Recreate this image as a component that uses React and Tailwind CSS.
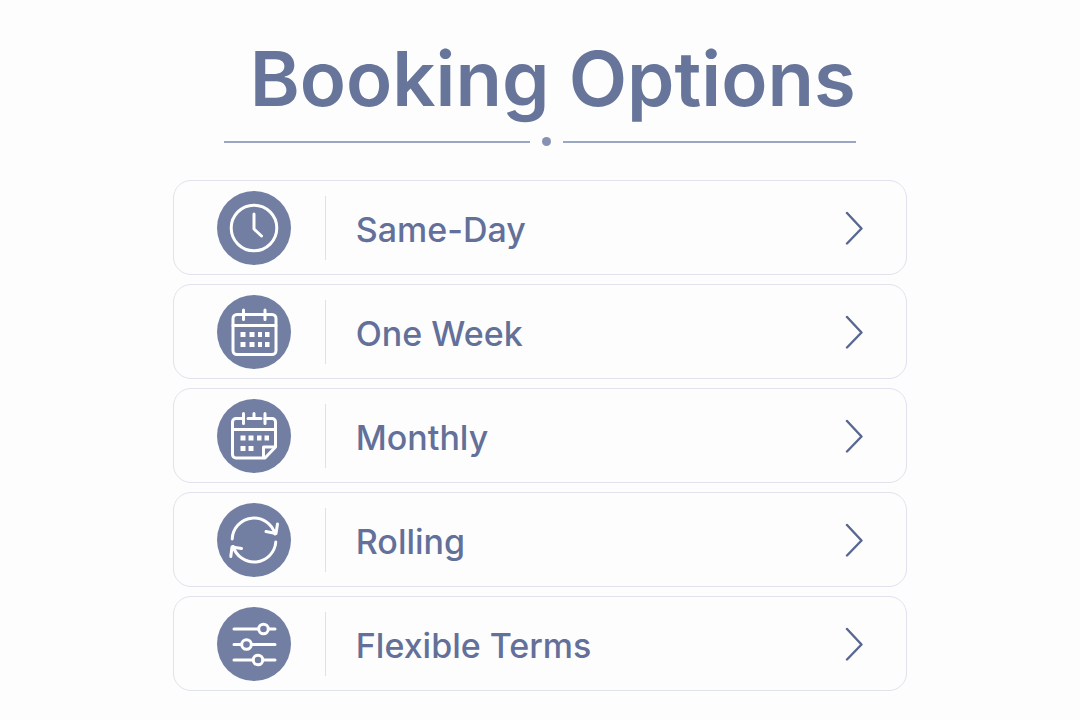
const iconProps = {
  viewBox: "0 0 74 74",
  fill: "none",
  stroke: "currentColor",
  strokeWidth: 3,
  strokeLinecap: "round",
  strokeLinejoin: "round",
  className: "size-full",
  "aria-hidden": true,
};

function ClockIcon() {
  return (
    <svg {...iconProps}>
      <circle cx="37" cy="37" r="22.8" />
      <path d="M37 23v15l7.500 7" />
    </svg>
  );
}

function WeekIcon() {
  return (
    <svg {...iconProps}>
      <rect x="16" y="19.500" width="43" height="40" rx="4" />
      <path d="M16 30.500h43M26.500 15v9.500M48 15v9.500" />
      <g fill="currentColor" stroke="none">
        <path d="M23.500 37h5v5h-5zM32.500 37h5v5h-5zM41 37h4v5h-4zM48 37h4.500v5h-4.500z" />
        <path d="M23.500 47h5v5h-5zM32.500 47h5v5h-5zM41 47h4v5h-4zM48 47h4.500v5h-4.500z" />
      </g>
    </svg>
  );
}

function MonthIcon() {
  return (
    <svg {...iconProps}>
      <path d="M26.500 19.500h-7.500a3.500 3.500 0 0 0-3.500 3.500v32.500a3.500 3.500 0 0 0 3.500 3.500h29l10.500-11v-25a3.500 3.500 0 0 0-3.500-3.500h-7M31 19.500h13" />
      <path d="M15.500 30.500h43M26.500 14.500v10M37 14.500v4M48 14.500v10M46.500 58.500v-10.500h11" />
      <g fill="currentColor" stroke="none">
        <path d="M23.500 36.500h5v5h-5zM31.500 36.500h5v5h-5zM40 36.500h4.500v5h-4.500zM47.500 36.500h4.500v5h-4.500z" />
        <path d="M23.500 47h5v5h-5zM31.500 47h5v5h-5z" />
      </g>
    </svg>
  );
}

function RollingIcon() {
  return (
    <svg {...iconProps}>
      <path d="M15.200 36a21.800 21.800 0 0 1 42.800-5" />
      <path d="M49 28.500l10 2 1.500-9.500" />
      <path d="M58.800 39a21.800 21.800 0 0 1-42.600 4.500" />
      <path d="M13.800 53.500l1.200-9.500 9.500 1.500" />
    </svg>
  );
}

function SlidersIcon() {
  return (
    <svg {...iconProps}>
      <path d="M17 22h24.500M51.500 22h6.500M17 37.500h7.500M34.500 37.500h23.500M17 53h19M46 53h12" />
      <circle cx="46.500" cy="22" r="4.800" />
      <circle cx="29.500" cy="37.500" r="4.800" />
      <circle cx="41" cy="53" r="4.800" />
    </svg>
  );
}

const options = [
  { label: "Same-Day", Icon: ClockIcon },
  { label: "One Week", Icon: WeekIcon },
  { label: "Monthly", Icon: MonthIcon },
  { label: "Rolling", Icon: RollingIcon },
  { label: "Flexible Terms", Icon: SlidersIcon },
];

function OptionCard({ label, Icon }) {
  return (
    <button
      type="button"
      className="flex min-h-[95px] w-full cursor-pointer items-center rounded-[18px] border border-[#e0e3ec] bg-[#fdfdfe] px-[43px] text-left"
    >
      <span className="size-[74px] shrink-0 rounded-full bg-[#727fa3] text-white">
        <Icon />
      </span>
      <span className="ml-[34px] h-16 w-px shrink-0 bg-[#dfe1e8]" />
      <span className="ml-[30px] grow pt-1 text-[34px] leading-10 font-medium text-[#637099]">{label}</span>
      <svg
        viewBox="0 0 18 34"
        fill="none"
        stroke="#59678f"
        strokeWidth="2.4"
        strokeLinecap="round"
        strokeLinejoin="round"
        className="h-[34px] w-[18px] shrink-0"
        aria-hidden="true"
      >
        <path d="M2 2l14.500 15.500L2 32.500" />
      </svg>
    </button>
  );
}

export default function App() {
  return (
    <main className="min-h-screen bg-[#fdfdfd] pb-7 font-['Inter',sans-serif]">
      <div className="mx-auto w-[68%]">
        <header className="mx-auto w-[86%] pt-8">
          <h1 className="text-right text-[76px] leading-[92px] font-semibold whitespace-nowrap text-[#67759b]">
            Booking Options
          </h1>
          <div className="mt-[13px] grid grid-cols-[306fr_9px_293fr] items-center gap-3">
            <span className="h-0.5 bg-[#9ba6c2]" />
            <span className="size-[9px] rounded-full bg-[#8592b4]" />
            <span className="h-0.5 bg-[#9ba6c2]" />
          </div>
        </header>

        <ul className="mt-[34px] flex flex-col gap-[9px]">
          {options.map((option) => (
            <li key={option.label}>
              <OptionCard {...option} />
            </li>
          ))}
        </ul>
      </div>
    </main>
  );
}
